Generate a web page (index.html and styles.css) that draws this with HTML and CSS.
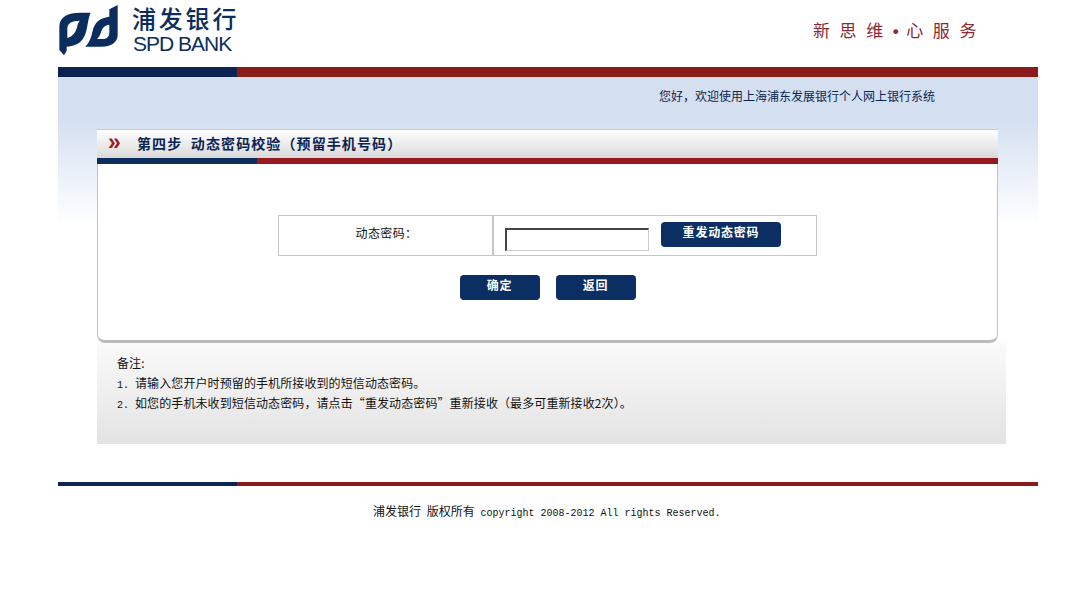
FILE: index.html
```html
<!DOCTYPE html>
<html lang="zh-CN">
<head>
<meta charset="utf-8">
<title>浦发银行</title>
<link rel="stylesheet" href="styles.css">
</head>
<body>
<div class="page">
  <header class="header">
    <div class="logo">
      <svg class="logo-mark" viewBox="24 15 180 156" aria-hidden="true">
        <path fill="#0b2d5e" fill-rule="evenodd" d="M28 80C28 50 55 38 90 38L122 38C116 50 114 70 110 88C104 115 92 138 50 140L50 152L42 166L28 150ZM52 86C52 70 64 62 90 62C84 68 83 74 81 82C77 98 68 110 52 114Z"/>
        <path fill="#0b2d5e" fill-rule="evenodd" d="M203 15L203 105C203 128 182 140 155 140L106 140C118 128 124 112 128 92C133 70 146 54 178 50L178 28ZM178 74C164 75 157 84 154 94C151 104 147 112 141 117L156 117C170 117 178 110 178 98Z"/>
      </svg>
      <div class="logo-text">
        <div class="logo-cn">浦发银行</div>
        <div class="logo-en">SPD BANK</div>
      </div>
    </div>
    <div class="slogan">新思维<span class="dot">•</span>心服务</div>
  </header>
  <div class="bar"><span class="bar-blue"></span></div>
  <main class="content">
    <p class="welcome">您好，欢迎使用上海浦东发展银行个人网上银行系统</p>
    <section class="panel">
      <div class="panel-title"><span class="arrows">»</span><h1>第四步&nbsp;&nbsp;动态密码校验（预留手机号码）</h1></div>
      <div class="panel-bar"><span class="panel-bar-blue"></span></div>
      <div class="panel-body">
        <div class="form-table">
          <div class="form-label">动态密码：</div>
          <div class="form-field">
            <input class="code-input" type="text">
            <button class="btn btn-wide" type="button">重发动态密码</button>
          </div>
        </div>
        <div class="actions">
          <button class="btn" type="button">确定</button>
          <button class="btn" type="button">返回</button>
        </div>
      </div>
    </section>
    <section class="notes">
      <p>备注:</p>
      <p class="note-item"><span class="num">1.</span>请输入您开户时预留的手机所接收到的短信动态密码。</p>
      <p class="note-item"><span class="num">2.</span>如您的手机未收到短信动态密码，请点击“重发动态密码”重新接收（最多可重新接收2次）。</p>
    </section>
  </main>
  <footer class="footer">
    <div class="bar thin"><span class="bar-blue"></span></div>
    <p class="copyright">浦发银行 版权所有 <span class="latin">copyright 2008-2012 All rights Reserved.</span></p>
  </footer>
</div>
</body>
</html>
```
FILE: styles.css
```css
* { box-sizing: border-box; }
html, body { margin: 0; padding: 0; background: #fff; }
body { font-family: "Noto Sans CJK SC", "Liberation Sans", sans-serif; font-size: 12px; color: #111; }
p, h1 { margin: 0; }

.page { width: 980px; margin-left: 58px; }

.header { height: 67px; display: flex; justify-content: space-between; align-items: flex-start; }
.logo { display: flex; margin-top: 5px; }
.logo-mark { width: 60px; height: 52px; display: block; }
.logo-text { margin-left: 14px; color: #0b2d5e; }
.logo-cn { font-size: 24px; font-weight: 500; line-height: 30px; letter-spacing: 2.8px; margin-top: -2px; white-space: nowrap; }
.logo-en { font-family: "Liberation Sans", sans-serif; font-size: 21px; line-height: 20px; letter-spacing: -1px; margin: 1px 0 0 1px; white-space: nowrap; }
.slogan { margin: 18px 52px 0 0; font-size: 17px; line-height: 24px; color: #8c2a33; letter-spacing: 9.6px; white-space: nowrap; }
.dot { display: inline-block; width: 13.4px; letter-spacing: 0; font-family: "Liberation Sans", sans-serif; font-size: 17px; font-weight: 700; }

.bar { height: 10px; background: #8b1a1a; }
.bar-blue { display: block; width: 179px; height: 100%; background: #0b2454; }
.thin { height: 4px; }

.content { background: linear-gradient(#d4dff0 0, #d4dff0 40px, #fff 148px); padding: 10px 32px 0 39px; }
.welcome { margin-left: 562px; font-size: 12px; line-height: 18px; height: 42px; color: #0b2454; white-space: nowrap; }

.panel { width: 901px; }
.panel-title { height: 29px; display: flex; align-items: center; padding-left: 11px; border-top: 1px solid #c4c9cf; background: linear-gradient(#fff, #d9d9d9); }
.arrows { width: 29px; color: #a01c1c; font: 700 23px/20px "Liberation Sans", sans-serif; margin-top: -5px; }
.panel-title h1 { font-size: 14px; font-weight: 700; line-height: 20px; margin-top: -2px; color: #0b2454; letter-spacing: 1.1px; white-space: nowrap; }
.panel-bar { height: 6px; background: #96191f; }
.panel-bar-blue { display: block; width: 160px; height: 100%; background: #0c2d5e; }
.panel-body { height: 179px; background: #fff; border: 1px solid #c2c2c2; border-top: 0; border-bottom: 3px solid #bbb; border-radius: 0 0 8px 8px; padding-top: 51px; }

.form-table { width: 539px; height: 41px; margin-left: 180px; display: flex; border: 1px solid #c6c6c6; }
.form-label { width: 215px; text-align: center; line-height: 33px; border-right: 2px solid #c6c6c6; letter-spacing: .4px; padding-left: 2px; }
.form-field { flex: 1; display: flex; align-items: flex-start; padding: 6px 0 0 11px; }
.code-input { width: 144px; height: 23px; margin-top: 6px; padding: 0; background: #fff; border: 1px solid #ccc; border-top: 2px solid #444; border-left: 2px solid #444; }
.btn { width: 80px; height: 25px; border: 0; border-radius: 4px; background: #0b2e63; color: #fff; font: 700 12px/20px "Noto Sans CJK SC", sans-serif; letter-spacing: .8px; padding: 0 0 6px; }
.btn-wide { width: 120px; margin-left: 12px; }
.actions { display: flex; justify-content: center; gap: 16px; margin-top: 19px; }

.notes { width: 909px; height: 101px; padding: 10px 0 0 20px; background: linear-gradient(#fafafa, #e3e3e3); }
.notes p { line-height: 20px; letter-spacing: .1px; white-space: nowrap; }
.notes .note-item { display: flex; align-items: baseline; height: 20px; }
.num { width: 18px; font-family: "Liberation Mono", monospace; font-size: 10px; }

.footer { margin-top: 38px; }
.copyright { margin-top: 16px; padding-left: 315px; font-size: 12px; line-height: 18px; word-spacing: 3px; white-space: nowrap; }
.latin { font-family: "Liberation Mono", monospace; font-size: 10px; word-spacing: 0; }
```
